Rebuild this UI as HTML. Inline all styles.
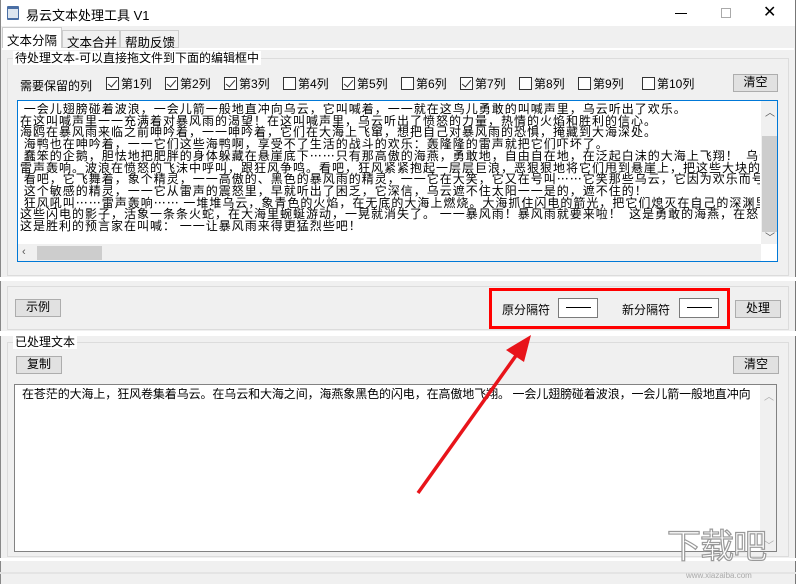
<!DOCTYPE html>
<html><head><meta charset="utf-8"><style>
*{margin:0;padding:0;box-sizing:border-box}
body{width:796px;height:584px;overflow:hidden;background:#f0f0f0;font-family:"Liberation Sans","Noto Sans CJK SC",sans-serif;font-size:12px;color:#000;position:relative}
.a{position:absolute}
.btn{position:absolute;background:#e1e1e1;border:1px solid #adadad;text-align:center;font-size:12px;line-height:15px}
.cb{position:absolute;top:77px;font-size:12px;line-height:13px;white-space:nowrap}
.cb i{display:inline-block;width:13px;height:13px;border:1px solid #333;background:#fff;vertical-align:-2px;margin-right:2px;position:relative;font-style:normal}
.cb i.c:after{content:"";position:absolute;left:3px;top:0px;width:4px;height:8px;border:solid #333;border-width:0 1.5px 1.5px 0;transform:rotate(40deg)}
.grp{position:absolute;border:1px solid #dcdcdc}
.leg{position:absolute;background:#fff;padding:0 2px;font-size:12px;line-height:14px}
.ta{font-family:"WenQuanYi Zen Hei","Noto Sans CJK SC",sans-serif;font-size:12px;line-height:11.7px;white-space:pre;letter-spacing:-0.1px}
</style></head><body>
<div class="a" style="left:0;top:0;width:796px;height:26px;background:#fff"></div>
<div class="a" style="left:7px;top:6px;width:12px;height:14px;background:#4a6fa5;border-radius:1px"></div>
<div class="a" style="left:8px;top:9px;width:10px;height:9px;background:#dde6f0"></div>
<div class="a" style="left:26px;top:5px;font-size:13px">易云文本处理工具 V1</div>
<div class="a" style="left:675px;top:13px;width:12px;height:1px;background:#000"></div>
<div class="a" style="left:721px;top:8px;width:10px;height:10px;border:1px solid #aaa"></div>
<div class="a" style="left:763px;top:2px;font-size:16px;font-weight:300">✕</div>
<div class="a" style="left:795px;top:0;width:1px;height:584px;background:#777"></div>
<div class="a" style="left:0;top:0;width:1px;height:584px;background:#888"></div>
<div class="a" style="left:2px;top:27px;width:60px;height:22px;background:#fff;border:1px solid #ccc;border-bottom:none;padding:2px 0 0 4px;font-size:12.5px">文本分隔</div>
<div class="a" style="left:62px;top:30px;width:58px;height:18px;border:1px solid #ccc;padding:1px 0 0 4px;font-size:12.5px">文本合并</div>
<div class="a" style="left:120px;top:30px;width:59px;height:18px;border:1px solid #ccc;padding:1px 0 0 4px;font-size:12.5px">帮助反馈</div>
<div class="a" style="left:2px;top:48px;width:792px;height:2px;background:#fff"></div>
<div class="grp" style="left:7px;top:58px;width:782px;height:218px"></div>
<div class="leg" style="left:13px;top:51px">待处理文本-可以直接拖文件到下面的编辑框中</div>
<div class="a" style="left:20px;top:77px">需要保留的列</div>
<div class="cb" style="left:106px"><i class="c"></i>第1列</div>
<div class="cb" style="left:165px"><i class="c"></i>第2列</div>
<div class="cb" style="left:224px"><i class="c"></i>第3列</div>
<div class="cb" style="left:283px"><i></i>第4列</div>
<div class="cb" style="left:342px"><i class="c"></i>第5列</div>
<div class="cb" style="left:401px"><i></i>第6列</div>
<div class="cb" style="left:460px"><i class="c"></i>第7列</div>
<div class="cb" style="left:519px"><i></i>第8列</div>
<div class="cb" style="left:578px"><i></i>第9列</div>
<div class="cb" style="left:642px"><i></i>第10列</div>
<div class="btn" style="left:733px;top:74px;width:45px;height:18px">清空</div>
<div class="a" style="left:17px;top:100px;width:761px;height:162px;background:#fff;border:1px solid #0078d7;overflow:hidden">
<div class="ta" style="position:absolute;left:2px;top:2px;width:740px;overflow:hidden;letter-spacing:1px"> 一会儿翅膀碰着波浪，一会儿箭一般地直冲向乌云，它叫喊着，一一就在这鸟儿勇敢的叫喊声里，乌云听出了欢乐。
在这叫喊声里一一充满着对暴风雨的渴望！在这叫喊声里，乌云听出了愤怒的力量，热情的火焰和胜利的信心。
海鸥在暴风雨来临之前呻吟着，一一呻吟着，它们在大海上飞窜，想把自己对暴风雨的恐惧，掩藏到大海深处。
 海鸭也在呻吟着，一一它们这些海鸭啊，享受不了生活的战斗的欢乐：轰隆隆的雷声就把它们吓坏了。
 蠢笨的企鹅，胆怯地把肥胖的身体躲藏在悬崖底下……只有那高傲的海燕，勇敢地，自由自在地，在泛起白沫的大海上飞翔！  乌云越来越暗
雷声轰响。波浪在愤怒的飞沫中呼叫，跟狂风争鸣。看吧，狂风紧紧抱起一层层巨浪，恶狠狠地将它们甩到悬崖上，把这些大块的翡翠摔成尘
 看吧，它飞舞着，象个精灵，一一高傲的、黑色的暴风雨的精灵，一一它在大笑，它又在号叫……它笑那些乌云，它因为欢乐而号叫！
 这个敏感的精灵，一一它从雷声的震怒里，早就听出了困乏，它深信，乌云遮不住太阳一一是的，遮不住的！
 狂风吼叫……雷声轰响…… 一堆堆乌云，象青色的火焰，在无底的大海上燃烧。大海抓住闪电的箭光，把它们熄灭在自己的深渊里。
这些闪电的影子，活象一条条火蛇，在大海里蜿蜒游动，一晃就消失了。 一一暴风雨！暴风雨就要来啦！  这是勇敢的海燕，在怒吼的大海上
这是胜利的预言家在叫喊： 一一让暴风雨来得更猛烈些吧！</div>
<div class="a" style="left:743px;top:0;width:17px;height:143px;background:#f0f0f0"></div>
<div class="a" style="left:747px;top:3px;font-size:10px;color:#555">︿</div>
<div class="a" style="left:744px;top:35px;width:15px;height:96px;background:#cdcdcd"></div>
<div class="a" style="left:747px;top:128px;font-size:10px;color:#555">﹀</div>
<div class="a" style="left:0;top:143px;width:743px;height:17px;background:#f0f0f0"></div>
<div class="a" style="left:4px;top:145px;font-size:11px;color:#555">‹</div>
<div class="a" style="left:19px;top:145px;width:65px;height:14px;background:#cdcdcd"></div>
</div>
<div class="a" style="left:0;top:277px;width:796px;height:4px;background:#fff"></div>
<div class="grp" style="left:7px;top:286px;width:782px;height:44px"></div>
<div class="btn" style="left:15px;top:299px;width:46px;height:18px">示例</div>
<div class="a" style="left:489px;top:288px;width:241px;height:41px;border:3px solid #f00"></div>
<div class="a" style="left:502px;top:301px">原分隔符</div>
<div class="a" style="left:558px;top:298px;width:40px;height:20px;background:#fff;border:1px solid #7a7a7a"></div>
<div class="a" style="left:566px;top:307px;width:25px;height:1px;background:#000"></div>
<div class="a" style="left:622px;top:301px">新分隔符</div>
<div class="a" style="left:679px;top:298px;width:40px;height:20px;background:#fff;border:1px solid #7a7a7a"></div>
<div class="a" style="left:687px;top:307px;width:25px;height:1px;background:#000"></div>
<div class="btn" style="left:735px;top:300px;width:46px;height:18px">处理</div>
<div class="a" style="left:0;top:331px;width:796px;height:5px;background:#fff"></div>
<div class="grp" style="left:7px;top:342px;width:782px;height:215px"></div>
<div class="leg" style="left:13px;top:335px">已处理文本</div>
<div class="btn" style="left:16px;top:356px;width:46px;height:18px">复制</div>
<div class="btn" style="left:733px;top:356px;width:46px;height:18px">清空</div>
<div class="a" style="left:14px;top:384px;width:763px;height:168px;background:#fff;border:1px solid #828282;overflow:hidden">
<div class="ta" style="position:absolute;left:7px;top:3px;width:735px;overflow:hidden">在苍茫的大海上，狂风卷集着乌云。在乌云和大海之间，海燕象黑色的闪电，在高傲地飞翔。 一会儿翅膀碰着波浪，一会儿箭一般地直冲向</div>
<div class="a" style="left:745px;top:0;width:17px;height:166px;background:#f0f0f0"></div>
<div class="a" style="left:749px;top:3px;font-size:10px;color:#aaa">︿</div>
<div class="a" style="left:749px;top:152px;font-size:10px;color:#aaa">﹀</div>
</div>
<div class="a" style="left:0;top:558px;width:796px;height:3px;background:#fff"></div>
<div class="a" style="left:0;top:572px;width:796px;height:2px;background:#e4e4e4"></div>
<svg class="a" style="left:0;top:0" width="796" height="584">
<line x1="418" y1="493" x2="520" y2="350" stroke="#e8141a" stroke-width="3.5"/>
<polygon points="531,335 506,350 524,362" fill="#e8141a"/>
</svg>
<div class="a" style="left:667px;top:527px;font-size:34px;line-height:40px;color:#fff;-webkit-text-stroke:1.2px #999;letter-spacing:-1px;font-family:'WenQuanYi Zen Hei',sans-serif">下载吧</div>
<div class="a" style="left:686px;top:571px;font-size:8px;color:#aaa">www.xiazaiba.com</div>
</body></html>
